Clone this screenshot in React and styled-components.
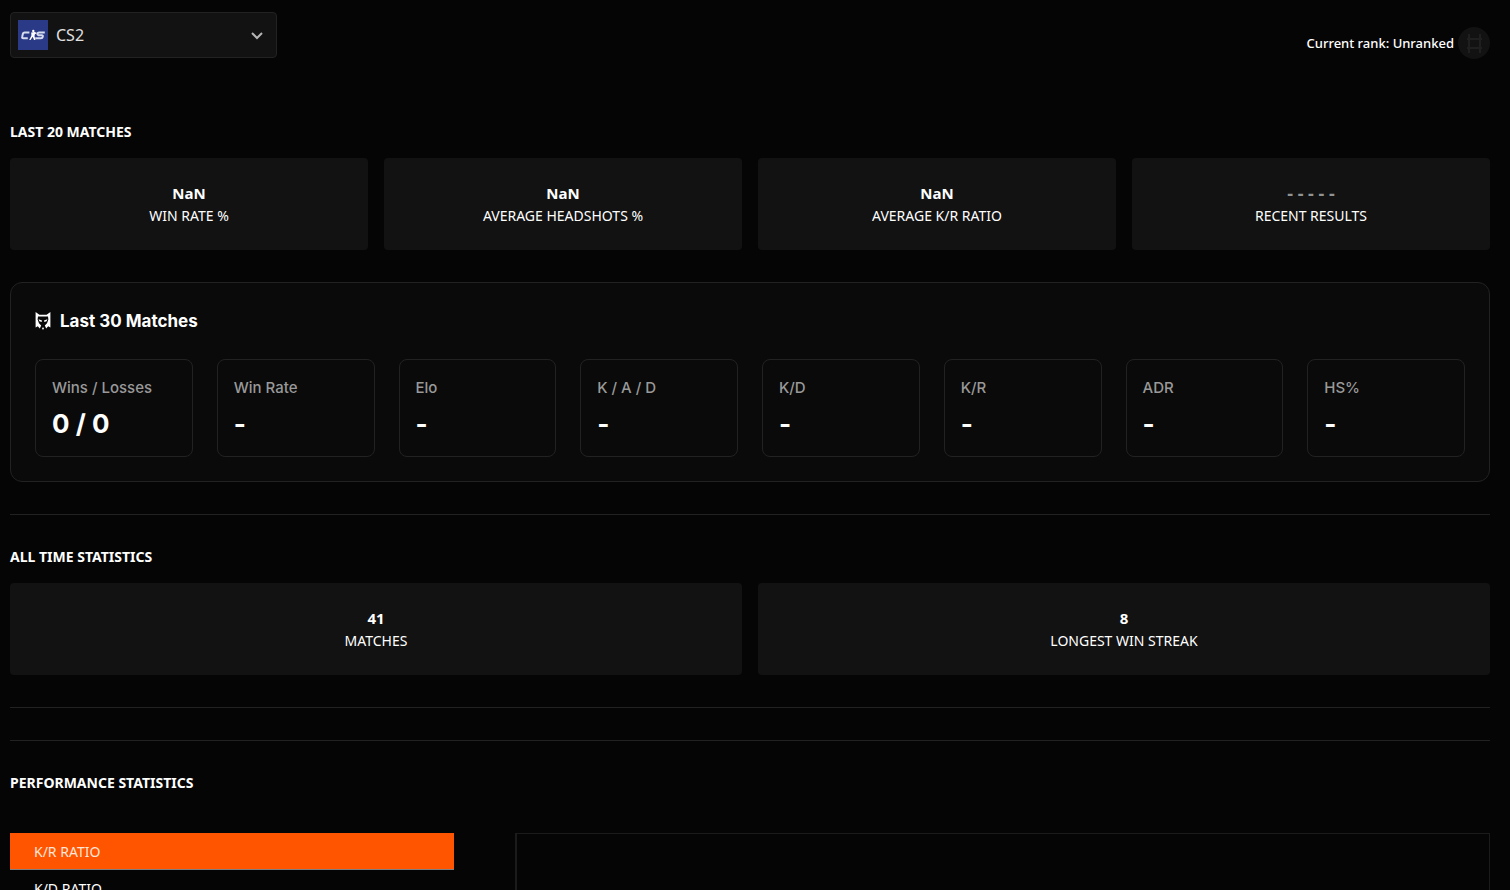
import React, { useState } from 'react';
import styled, { createGlobalStyle } from 'styled-components';

const recent = [
    { label: 'Win Rate %', value: 'NaN' },
    { label: 'Average Headshots %', value: 'NaN' },
    { label: 'Average K/R Ratio', value: 'NaN' },
    { label: 'Recent Results', value: '- - - - -', muted: true }
];

const last30 = [
    { label: 'Wins / Losses', value: '0 / 0' },
    { label: 'Win Rate', value: '-' },
    { label: 'Elo', value: '-' },
    { label: 'K / A / D', value: '-' },
    { label: 'K/D', value: '-' },
    { label: 'K/R', value: '-' },
    { label: 'ADR', value: '-' },
    { label: 'HS%', value: '-' }
];

const allTime = [
    { label: 'Matches', value: '41' },
    { label: 'Longest Win Streak', value: '8' }
];

const charts = ['K/R Ratio', 'K/D Ratio'];

const GameLogo = () => (
    <svg width="30" height="30" viewBox="0 0 30 30" aria-hidden="true">
        <rect width="30" height="30" fill="#2a3a86" />
        <g fill="none" stroke="#d6dbee" strokeWidth="2" strokeLinejoin="round">
            <path d="M11.4 12.6H6.6Q5.3 12.6 4.9 13.7L4.2 16.7Q3.8 18.2 5.2 18.2H9.8" />
            <path d="M26.8 12.6H21Q19.7 12.6 19.4 13.6T20.3 15.2H23.8Q25.1 15.2 24.8 16.7T23 18.2H17.2" />
        </g>
        <circle cx="15.3" cy="11" r="1.2" fill="#fff" />
        <path d="M13.2 12.4L16.8 12.1L19 12.9L16.9 14.3L16.5 16L17.4 19.9H16L14.7 16.8L12.6 20H11.2L13.4 15.6Z" fill="#fff" />
    </svg>
);

const WolfIcon = () => (
    <svg width="16" height="18" viewBox="0 0 16 18" aria-hidden="true">
        <path
            fill="#fff"
            fillRule="evenodd"
            d="M0.6 0L4.4 2.8H11.6L15.4 0V15.6L13.2 14.2L11.2 16.6L9.8 13.6L12 11.2L13.4 7.6L13 4.6H3L2.6 7.6L4 11.2L6.2 13.6L4.8 16.6L2.8 14.2L0.6 15.6Z"
        />
        <path fill="#fff" d="M3.6 7.2L7 8.6L6.6 10L4.4 9.2ZM12.4 7.2L9 8.6L9.4 10L11.6 9.2ZM7 16.2L8 15.2L9 16.2L8 18Z" />
    </svg>
);

const Chevron = () => (
    <svg width="14" height="14" viewBox="0 0 14 14" aria-hidden="true">
        <path d="M2 5L7 10L12 5" fill="none" stroke="#b5b5b5" strokeWidth="2" />
    </svg>
);

const RankIcon = () => (
    <svg width="32" height="32" viewBox="0 0 32 32" aria-hidden="true">
        <circle cx="16" cy="16" r="16" fill="#121212" />
        <path d="M11 7V26M22 7V26M9 12H24M9 21H24" fill="none" stroke="#1f1f1f" strokeWidth="2" />
    </svg>
);

const StatCards = ({ items }) => (
    <CardGrid $columns={items.length}>
        {items.map(item => (
            <Card key={item.label}>
                <CardValue $muted={item.muted}>{item.value}</CardValue>
                <CardLabel>{item.label}</CardLabel>
            </Card>
        ))}
    </CardGrid>
);

const App = () => {
    const [game, setGame] = useState('CS2');
    const [chart, setChart] = useState(charts[0]);

    return (
        <Page>
            <GlobalStyle />
            <Header>
                <GamePicker>
                    <GameLogo />
                    <GameSelect
                        aria-label="Game"
                        value={game}
                        onChange={e => setGame(e.target.value)}
                    >
                        <option>CS2</option>
                    </GameSelect>
                    <Chevron />
                </GamePicker>
                <Rank>
                    <span>Current rank: Unranked</span>
                    <RankIcon />
                </Rank>
            </Header>

            <Heading>Last 20 Matches</Heading>
            <StatCards items={recent} />

            <Panel>
                <PanelTitle>
                    <WolfIcon />
                    Last 30 Matches
                </PanelTitle>
                <TileGrid>
                    {last30.map(item => (
                        <Tile key={item.label}>
                            <TileLabel>{item.label}</TileLabel>
                            <TileValue>{item.value}</TileValue>
                        </Tile>
                    ))}
                </TileGrid>
            </Panel>

            <Divider />
            <Heading>All Time Statistics</Heading>
            <StatCards items={allTime} />
            <Divider />
            <Divider />
            <Heading>Performance Statistics</Heading>
            <Performance>
                <ChartList>
                    {charts.map(name => (
                        <ChartButton
                            key={name}
                            type="button"
                            $active={name === chart}
                            onClick={() => setChart(name)}
                        >
                            {name}
                        </ChartButton>
                    ))}
                </ChartList>
                <ChartArea />
            </Performance>
        </Page>
    );
};

export default App;

const GlobalStyle = createGlobalStyle`
    * {
        box-sizing: border-box;
    }

    body {
        margin: 0;
        background: #050505;
        color: #fff;
        font-family: 'Noto Sans', sans-serif;
    }

    svg {
        display: block;
        flex: none;
    }
`

const Page = styled.main`
    padding: 12px 20px 0 10px;
`

const Header = styled.header`
    display: flex;
    justify-content: space-between;
    align-items: flex-end;
    height: 47px;
    margin-bottom: 63px;
`

const GamePicker = styled.div`
    display: flex;
    align-items: center;
    align-self: flex-start;
    width: 267px;
    height: 46px;
    padding: 0 12px 0 7px;
    border: 1px solid #222;
    border-radius: 4px;
    background: #121212;
`

const GameSelect = styled.select`
    flex: 1;
    height: 100%;
    padding: 0 8px;
    border: none;
    outline: none;
    appearance: none;
    background: transparent;
    color: #e0e0e0;
    font-family: inherit;
    font-size: 16px;
`

const Rank = styled.div`
    display: flex;
    align-items: center;
    gap: 4px;
    font-size: 13px;
    font-weight: 500;
`

const Heading = styled.h2`
    margin: 0;
    font-size: 14px;
    line-height: 20px;
    font-weight: 700;
    text-transform: uppercase;
`

const CardGrid = styled.div`
    display: grid;
    grid-template-columns: repeat(${props => props.$columns}, 1fr);
    gap: 16px;
    margin-top: 16px;
`

const Card = styled.div`
    padding: 24px 16px;
    border-radius: 4px;
    background: #121212;
    text-align: center;
`

const CardValue = styled.div`
    margin-bottom: 2px;
    font-size: ${props => (props.$muted ? '18px' : '15px')};
    line-height: 22px;
    font-weight: 700;
    color: ${props => (props.$muted ? '#929292' : '#fff')};
`

const CardLabel = styled.div`
    font-size: 14px;
    line-height: 20px;
    text-transform: uppercase;
`

const Panel = styled.section`
    margin-top: 32px;
    padding: 24px;
    border: 1px solid #222;
    border-radius: 12px;
    background: #0a0a0a;
    font-family: Inter, sans-serif;
`

const PanelTitle = styled.h3`
    display: flex;
    align-items: center;
    gap: 9px;
    margin: 0 0 24px;
    font-size: 17px;
    line-height: 28px;
    font-weight: 700;
`

const TileGrid = styled.div`
    display: grid;
    grid-template-columns: repeat(8, 1fr);
    gap: 24px;
`

const Tile = styled.div`
    padding: 15px 16px;
    border: 1px solid #222;
    border-radius: 8px;
`

const TileLabel = styled.div`
    color: #999;
    font-size: 15px;
    line-height: 26px;
    font-weight: 500;
`

const TileValue = styled.div`
    margin-top: 6px;
    font-size: 26px;
    line-height: 34px;
    font-weight: 700;
`

const Divider = styled.hr`
    height: 1px;
    margin: 32px 0;
    border: none;
    background: #222;
`

const Performance = styled.div`
    display: grid;
    grid-template-columns: 30% 1fr;
    column-gap: 61px;
    margin-top: 40px;
`

const ChartList = styled.div`
    display: flex;
    flex-direction: column;
`

const ChartButton = styled.button`
    height: 37px;
    padding: 0 24px;
    border: none;
    border-bottom: 1px solid ${props => (props.$active ? '#7f7f7f' : '#222')};
    background: ${props => (props.$active ? '#ff5500' : 'transparent')};
    color: ${props => (props.$active ? '#ffe6da' : '#fff')};
    font-family: inherit;
    font-size: 14px;
    text-align: left;
    text-transform: uppercase;
    cursor: pointer;
`

const ChartArea = styled.div`
    min-height: 320px;
    border: 1px solid #1b1b1b;
    border-left-width: 2px;
`
